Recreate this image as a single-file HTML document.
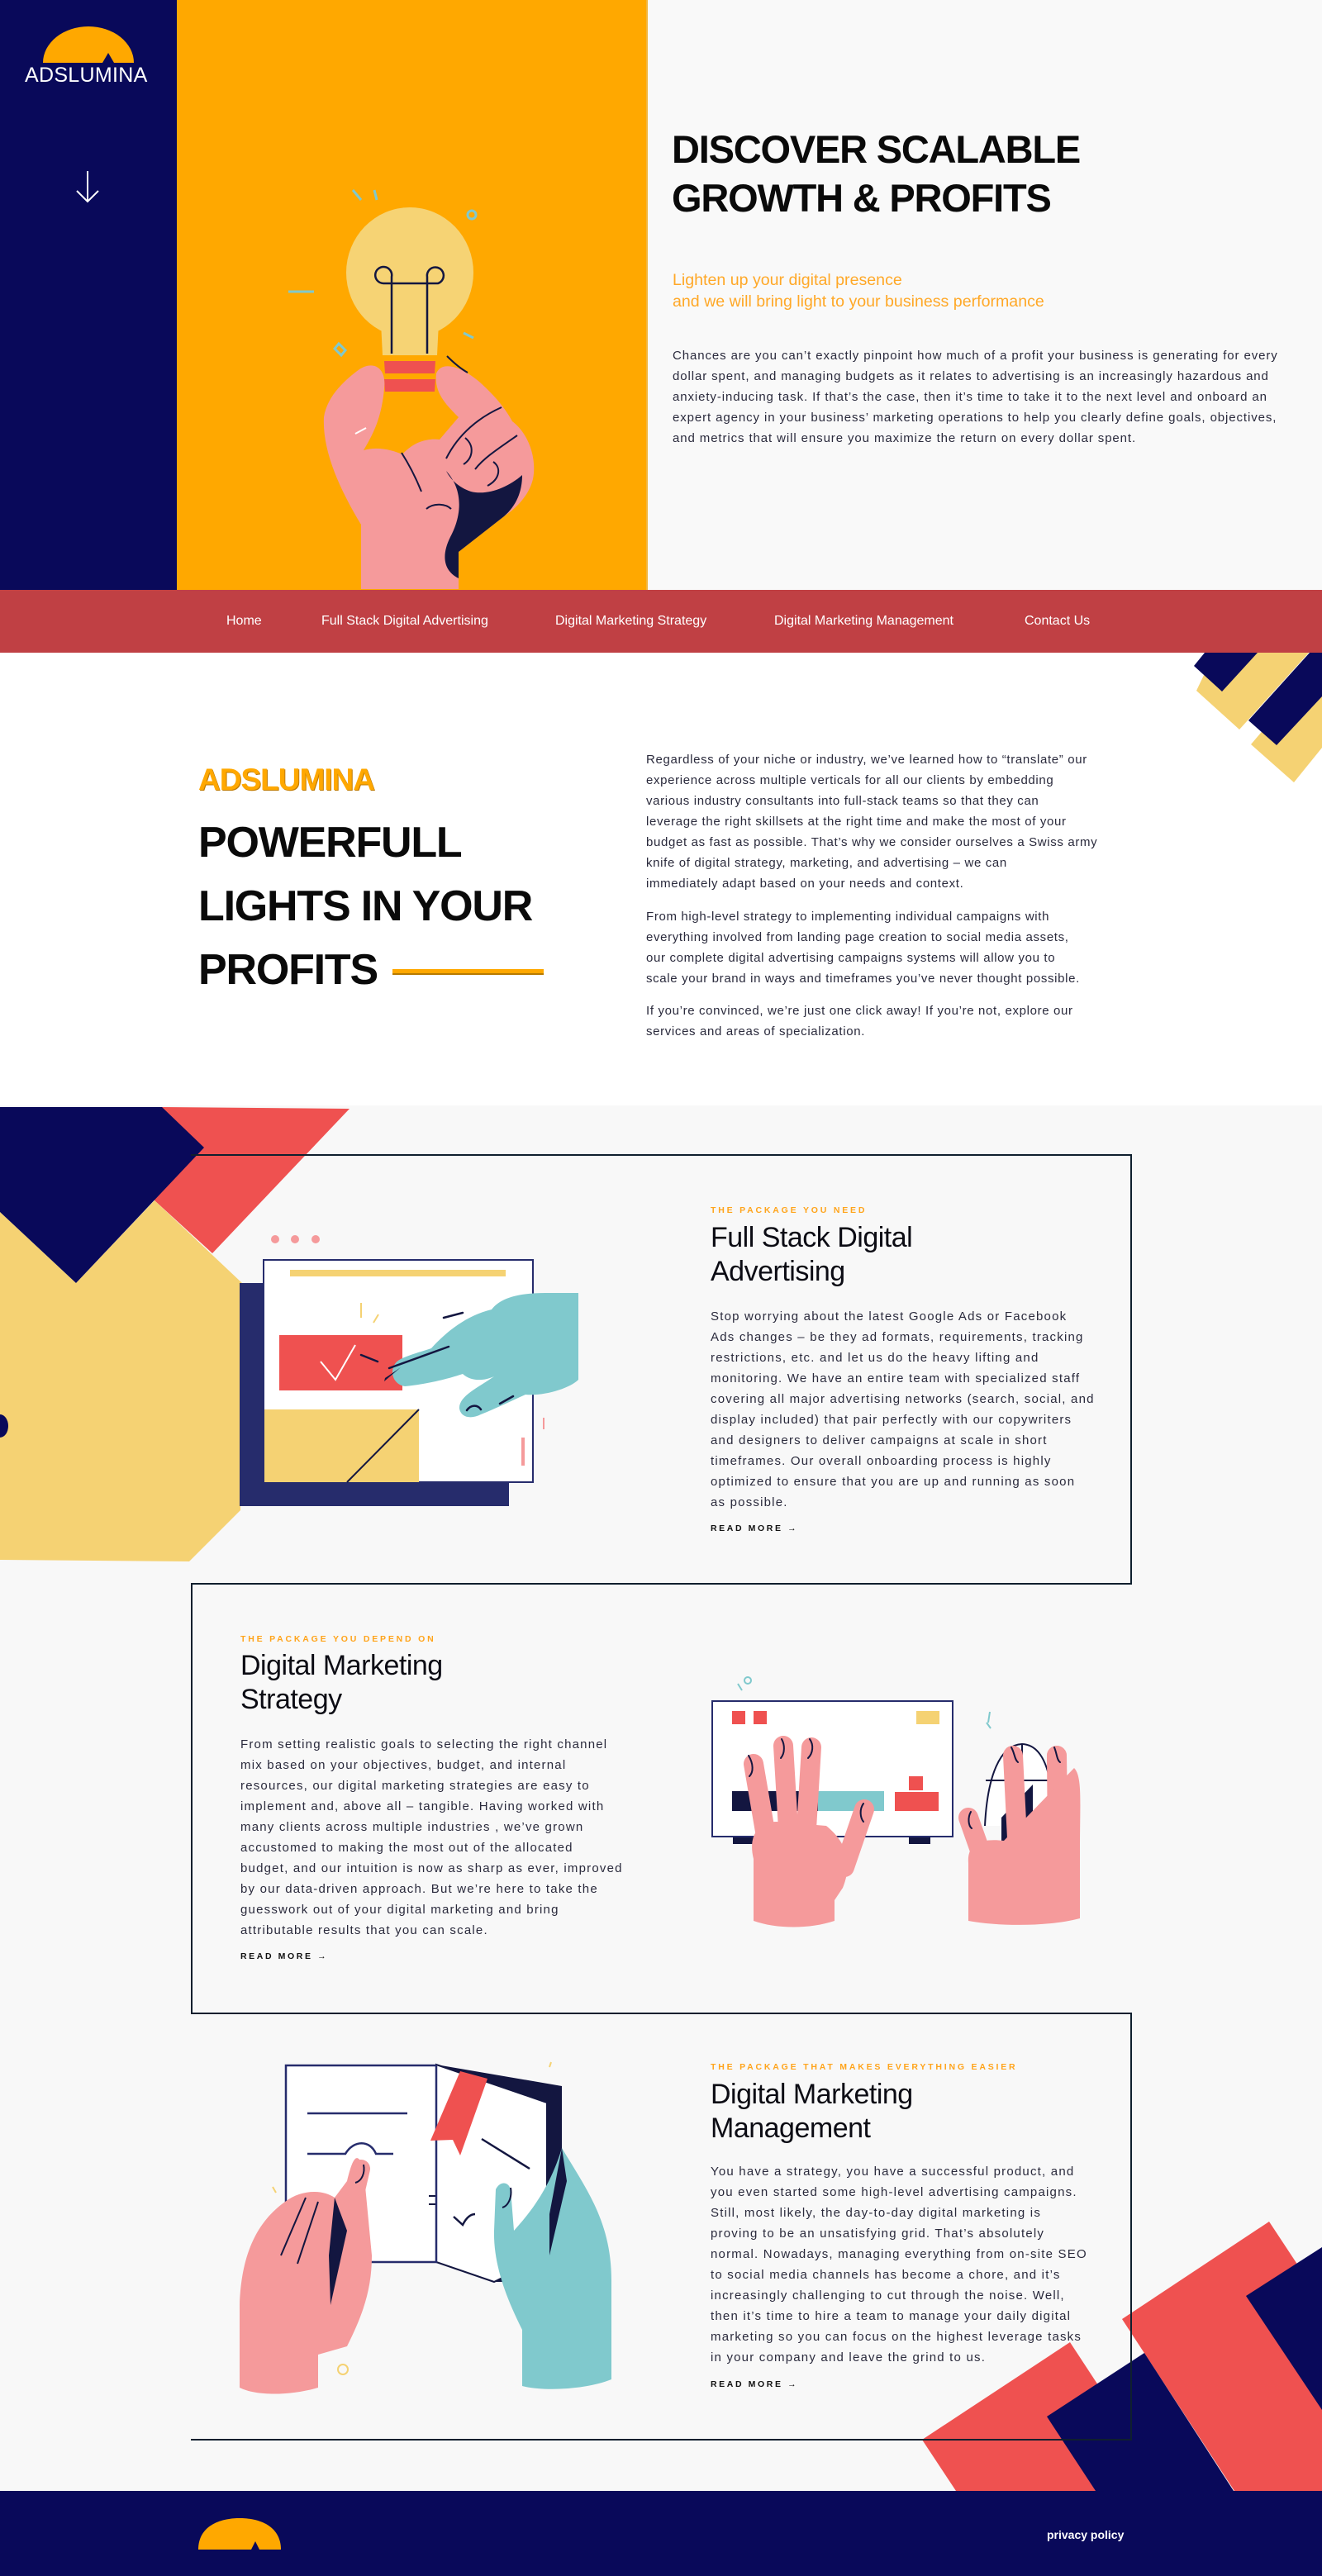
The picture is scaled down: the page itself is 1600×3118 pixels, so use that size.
<!DOCTYPE html>
<html><head><meta charset="utf-8">
<style>
*{margin:0;padding:0;box-sizing:border-box}
html,body{width:1600px;height:3118px;overflow:hidden;background:#f8f8f8}
body{position:relative;font-family:"Liberation Sans",sans-serif;color:#26263a}
.a{position:absolute;white-space:nowrap}
svg.bg{position:absolute;left:0;top:0}
.p{font-size:15px;line-height:25px;color:#2a2a3c}
.ph{letter-spacing:0.9px}
.ps{letter-spacing:0.65px}
.pc{font-size:15px;line-height:25px;letter-spacing:1.2px;color:#2a2a3c}
.lab{font-size:10.5px;line-height:14px;letter-spacing:2.8px;color:#ffa41b;font-weight:bold}
.rm{font-size:10.5px;line-height:14px;letter-spacing:2.6px;color:#111;font-weight:bold}
.ct{font-size:34px;line-height:41px;color:#0c0c14;letter-spacing:-0.5px}
.nav{font-size:16px;color:#fff;top:740px;line-height:24px}
</style></head><body>
<svg class="bg" width="1600" height="3118" viewBox="0 0 1600 3118">
<rect x="0" y="0" width="1600" height="714" fill="#f9f9f9"/>
<rect x="0" y="0" width="214" height="714" fill="#09095a"/>
<rect x="214" y="0" width="568" height="714" fill="#ffa800"/>
<rect x="782" y="0" width="2" height="714" fill="#f2b640"/>
<path d="M52,76 A55,44 0 0 1 162,76 Z" fill="#ffa800"/>
<path d="M124,76 L131,64 L138,76 Z" fill="#09095a"/>
<path d="M106,207 L106,244 M93,231 L106,244 L119,231" stroke="#fff" stroke-width="2" fill="none"/>
<g stroke="#80c9cd" stroke-width="3" fill="none">
<path d="M427,230 L437,242"/><path d="M453,230 L456,242"/><circle cx="571" cy="260" r="5"/><path d="M349,353 L380,353"/><path d="M561,403 L573,409"/><path d="M405,422 L413,430 L418,424 L410,416 Z"/>
</g>
<ellipse cx="496" cy="330" rx="77" ry="79" fill="#f6d374"/>
<path d="M461,390 L531,390 L529,430 L463,430 Z" fill="#f6d374"/>
<g stroke="#131640" stroke-width="2.5" fill="none">
<path d="M474,428 L474,335 A10,10 0 1 0 464,343 L530,343 A10,10 0 1 0 517,335 L517,428"/>
</g>
<path d="M465,437 L527,437 L526,452 L466,452 Z M465,459 L527,459 L526,474 L466,474 Z" fill="#ef5150"/>
<path d="M437,713 L437,635 C410,590 390,545 392,505 C396,478 420,458 435,447 C452,436 468,445 465,470 C462,505 452,525 440,545 C458,540 475,545 487,550 C500,535 518,530 532,532 L555,505 C540,490 525,475 528,452 C535,435 560,445 580,462 C600,480 612,495 620,510 C640,525 650,555 645,580 C640,600 625,615 610,625 L555,668 L555,713 Z" fill="#f59a9b"/>
<path d="M540,570 C560,592 560,622 545,650 C535,670 535,690 555,700 L555,668 L610,625 C625,612 632,595 632,575 C615,590 590,600 570,595 C555,590 545,580 540,570 Z" fill="#131640"/>
<g stroke="#131640" stroke-width="2" fill="none">
<path d="M541,431 C550,440 557,446 566,451"/><path d="M607,493 C580,505 555,525 540,555"/><path d="M626,527 C600,545 585,555 575,568"/><path d="M486,548 C500,570 508,590 510,595"/><path d="M516,616 C525,608 540,610 546,616"/><path d="M563,530 C575,540 572,555 561,562"/><path d="M597,559 C607,566 605,580 590,588"/>
</g>
<path d="M430,525 L443,518" stroke="#fff" stroke-width="2"/>
<rect x="0" y="714" width="1600" height="76" fill="#c04044"/>
<rect x="0" y="790" width="1600" height="548" fill="#ffffff"/>
<polygon points="1470,790 1584,790 1500,883 1448,836" fill="#f5d273"/>
<polygon points="1458,790 1522,790 1479,837 1445,806" fill="#09095a"/>
<polygon points="1600,800 1600,905 1566,947 1514,901" fill="#f5d273"/>
<polygon points="1585,790 1600,790 1600,843 1545,902 1511,872" fill="#09095a"/>
<rect x="475" y="1173" width="183" height="5" fill="#ffa800"/>
<rect x="475" y="1178" width="183" height="2" fill="#b77a00"/>
<polygon points="196,1340 423,1342 257,1517 187,1453" fill="#ef5150"/>
<polygon points="0,1467 92,1553 187,1453 293,1553 291,1828 229,1890 0,1888" fill="#f5d273"/>
<polygon points="0,1340 196,1340 247,1389 92,1553 0,1467" fill="#09095a"/>
<path d="M0,1712 A10,14 0 0 1 0,1740 Z" fill="#09095a"/>
<circle cx="333" cy="1500" r="5" fill="#f59a9b"/><circle cx="357" cy="1500" r="5" fill="#f59a9b"/><circle cx="382" cy="1500" r="5" fill="#f59a9b"/>
<rect x="290" y="1553" width="326" height="270" fill="#262c6c"/>
<rect x="319" y="1525" width="326" height="269" fill="#fff" stroke="#262c6c" stroke-width="2"/>
<rect x="351" y="1537" width="261" height="8" fill="#f5d273"/>
<rect x="338" y="1616" width="149" height="67" fill="#ef5150"/>
<path d="M388,1648 L406,1670 L430,1628" stroke="#fff" stroke-width="2" fill="none"/>
<rect x="320" y="1706" width="187" height="88" fill="#f5d273"/>
<path d="M420,1794 L507,1706" stroke="#131640" stroke-width="2"/>
<path d="M437,1577 L437,1595 M458,1591 L452,1601" stroke="#f5d273" stroke-width="2"/>
<rect x="631" y="1740" width="4" height="34" fill="#f59a9b"/><rect x="657" y="1716" width="2" height="14" fill="#f59a9b"/>
<path d="M700,1565 L660,1565 C625,1565 605,1572 595,1585 C565,1592 540,1612 522,1632 C510,1636 495,1640 485,1645 C470,1652 472,1675 490,1678 C520,1675 545,1668 560,1663 C570,1672 585,1672 598,1666 C578,1680 555,1690 556,1705 C558,1716 570,1718 582,1712 C600,1705 620,1695 636,1688 C660,1690 690,1680 700,1670 Z" fill="#80c9cd"/>
<g stroke="#131640" stroke-width="2.5" fill="none" stroke-linecap="round"><path d="M537,1595 L560,1589"/><path d="M471,1656 L543,1630"/><path d="M437,1640 L457,1648"/><path d="M605,1699 L621,1690"/><path d="M565,1707 C570,1700 578,1700 582,1706"/></g>
<path d="M466,1668 C472,1664 478,1660 485,1655 L465,1672 Z" fill="#131640"/>
<g stroke="#80c9cd" stroke-width="2" fill="none"><path d="M893,2038 L898,2046"/><circle cx="905" cy="2034" r="4"/><path d="M1196,2085 L1198,2072"/><path d="M1199,2092 L1194,2085"/></g>
<rect x="887" y="2223" width="26" height="9" fill="#131640"/><rect x="1100" y="2223" width="26" height="9" fill="#131640"/>
<rect x="862" y="2059" width="291" height="164" fill="#fff" stroke="#262c6c" stroke-width="2"/>
<rect x="886" y="2071" width="16" height="16" fill="#ef5150"/><rect x="912" y="2071" width="16" height="16" fill="#ef5150"/>
<rect x="1109" y="2071" width="28" height="16" fill="#f5d273"/>
<rect x="886" y="2168" width="110" height="24" fill="#131640"/><rect x="990" y="2168" width="80" height="24" fill="#80c9cd"/>
<rect x="1100" y="2150" width="17" height="17" fill="#ef5150"/><rect x="1083" y="2169" width="53" height="23" fill="#ef5150"/>
<g stroke="#f59a9b" stroke-width="24" stroke-linecap="round" fill="none">
<path d="M912,2135 L930,2240"/><path d="M948,2113 L955,2230"/><path d="M982,2115 L975,2230"/><path d="M1046,2190 L1022,2260"/>
<path d="M1226,2125 L1232,2240"/><path d="M1279,2125 L1280,2240"/><path d="M1172,2200 L1195,2265"/>
</g>
<path d="M1290,2155 L1290,2250 L1300,2250 L1305,2160 Z" fill="#f59a9b"/>
<path d="M912,2325 L912,2250 C905,2222 918,2205 940,2205 L1000,2210 C1025,2230 1032,2255 1020,2285 L1010,2300 L1010,2325 C980,2335 940,2335 912,2325 Z" fill="#f59a9b"/>
<path d="M1192,2210 C1195,2150 1210,2112 1237,2111 C1264,2112 1275,2150 1275,2210" fill="#fff" stroke="#131640" stroke-width="2"/>
<path d="M1193,2155 L1275,2155 M1237,2111 L1237,2155" stroke="#131640" stroke-width="2"/>
<path d="M1212,2200 L1250,2160 L1250,2230 L1212,2235 Z" fill="#131640"/>
<g stroke="#f59a9b" stroke-width="24" stroke-linecap="round" fill="none"><path d="M1226,2125 L1232,2245"/><path d="M1279,2125 L1280,2245"/></g>
<path d="M1172,2325 L1172,2255 C1170,2230 1190,2225 1215,2228 L1300,2140 C1310,2150 1307,2180 1307,2240 L1307,2322 C1270,2332 1210,2332 1172,2325 Z" fill="#f59a9b"/>
<g stroke="#131640" stroke-width="2" fill="none" stroke-linecap="round"><path d="M906,2125 C912,2135 912,2145 907,2150"/><path d="M946,2105 C950,2112 950,2122 945,2128"/><path d="M980,2105 C985,2112 984,2122 978,2128"/><path d="M1045,2183 C1040,2190 1041,2200 1045,2205"/><path d="M1224,2115 C1228,2122 1228,2130 1232,2133"/><path d="M1276,2115 C1279,2122 1279,2130 1283,2133"/><path d="M1175,2193 C1171,2200 1172,2210 1176,2213"/></g>
<polygon points="528,2499 680,2525 680,2762 598,2762 528,2738" fill="#131640"/>
<polygon points="528,2499 662,2545 662,2730 598,2762 528,2738" fill="#fff" stroke="#131640" stroke-width="2"/>
<rect x="346" y="2500" width="182" height="238" fill="#fff" stroke="#262c6c" stroke-width="2.5"/>
<path d="M372,2558 L493,2558" stroke="#262c6c" stroke-width="2.5"/>
<path d="M372,2607 L418,2607 C428,2590 448,2590 455,2607 L476,2607" stroke="#262c6c" stroke-width="2.5" fill="none"/>
<path d="M583,2589 L641,2625 M549,2683 L560,2693 C565,2683 570,2680 575,2680" stroke="#131640" stroke-width="2.5" fill="none"/>
<path d="M519,2658 L527,2658 M519,2668 L527,2668" stroke="#131640" stroke-width="2"/>
<polygon points="557,2507 590,2516 557,2609 548,2590 521,2591" fill="#ef5150"/>
<path d="M665,2502 L667,2496 M330,2647 L334,2654" stroke="#f5d273" stroke-width="2"/>
<circle cx="415" cy="2868" r="6" fill="none" stroke="#f5d273" stroke-width="2"/>
<path d="M290,2890 L290,2790 C292,2730 310,2690 345,2665 C365,2650 390,2650 405,2660 L420,2640 C426,2615 432,2600 440,2625 L450,2730 C450,2770 440,2800 420,2840 L385,2850 L385,2890 C350,2900 310,2900 290,2890 Z" fill="#f59a9b"/>
<g stroke="#f59a9b" stroke-width="22" stroke-linecap="round"><path d="M437,2625 L415,2720"/></g>
<path d="M405,2660 L398,2730 L400,2790 L420,2700 Z" fill="#131640"/>
<g stroke="#131640" stroke-width="2" fill="none"><path d="M440,2620 C442,2630 438,2640 430,2642"/><path d="M370,2660 L340,2730 M385,2665 L360,2740"/></g>
<path d="M632,2888 L632,2820 C612,2780 597,2740 598,2700 L600,2650 C605,2640 615,2640 618,2650 L622,2700 C640,2680 665,2650 680,2600 C710,2650 740,2690 740,2760 L740,2880 C710,2892 660,2895 632,2888 Z" fill="#80c9cd"/>
<path d="M680,2600 L686,2640 L665,2730 L665,2680 Z" fill="#131640"/>
<path d="M618,2648 C620,2660 615,2670 608,2672" stroke="#131640" stroke-width="2" fill="none"/>
<polygon points="1116,2953 1295,2835 1413,3015 1157,3015" fill="#ef5150"/>
<polygon points="1358,2807 1536,2689 1604,2792 1600,3015 1494,3015" fill="#ef5150"/>
<polygon points="1267,2925 1385,2848 1493,3015 1326,3015" fill="#09095a"/>
<polygon points="1508,2779 1600,2720 1600,2917" fill="#09095a"/>
<g fill="#0f1f2e">
<rect x="231" y="1397" width="1139" height="2"/>
<rect x="1368" y="1397" width="2" height="521"/>
<rect x="231" y="1916" width="1139" height="2"/>
<rect x="231" y="1916" width="2" height="522"/>
<rect x="231" y="2436" width="1139" height="2"/>
<rect x="1368" y="2436" width="2" height="518"/>
<rect x="231" y="2952" width="1139" height="2"/>
</g>
<rect x="0" y="3015" width="1600" height="103" fill="#09095a"/>
<path d="M240,3086 C240,3060 262,3048 290,3048 C318,3048 340,3060 340,3086 Z" fill="#ffa800"/>
<path d="M304,3086 L309,3076 L314,3086 Z" fill="#09095a"/>
</svg>

<div class="a" style="left:30px;top:76px;font-size:25px;line-height:30px;color:#fff;letter-spacing:0.3px">ADSLUMINA</div>

<div class="a" style="left:813px;top:151px;font-size:47px;line-height:59px;color:#0a0a0a;letter-spacing:-1.2px;font-weight:bold">DISCOVER SCALABLE<br>GROWTH &amp; PROFITS</div>
<div class="a" style="left:814px;top:326px;font-size:19.6px;line-height:26px;color:#ffa827">Lighten up your digital presence<br>and we will bring light to your business performance</div>
<div class="a p ph" style="left:814px;top:418px">Chances are you can’t exactly pinpoint how much of a profit your business is generating for every<br>dollar spent, and managing budgets as it relates to advertising is an increasingly hazardous and<br>anxiety-inducing task. If that’s the case, then it’s time to take it to the next level and onboard an<br>expert agency in your business’ marketing operations to help you clearly define goals, objectives,<br>and metrics that will ensure you maximize the return on every dollar spent.</div>

<div class="a nav" style="left:274px">Home</div>
<div class="a nav" style="left:389px">Full Stack Digital Advertising</div>
<div class="a nav" style="left:672px">Digital Marketing Strategy</div>
<div class="a nav" style="left:937px">Digital Marketing Management</div>
<div class="a nav" style="left:1240px">Contact Us</div>

<div class="a" style="left:240px;top:922px;font-size:37px;line-height:44px;color:#ffa800;font-weight:bold;letter-spacing:-1px;text-shadow:1px 1px 0 #c07a00">ADSLUMINA</div>
<div class="a" style="left:240px;top:982px;font-size:52px;line-height:77px;color:#0a0a0a;font-weight:bold;letter-spacing:-1.2px">POWERFULL<br>LIGHTS IN YOUR<br>PROFITS</div>
<div class="a p ps" style="left:782px;top:907px">Regardless of your niche or industry, we’ve learned how to “translate” our<br>experience across multiple verticals for all our clients by embedding<br>various industry consultants into full-stack teams so that they can<br>leverage the right skillsets at the right time and make the most of your<br>budget as fast as possible. That’s why we consider ourselves a Swiss army<br>knife of digital strategy, marketing, and advertising – we can<br>immediately adapt based on your needs and context.</div>
<div class="a p ps" style="left:782px;top:1097px">From high-level strategy to implementing individual campaigns with<br>everything involved from landing page creation to social media assets,<br>our complete digital advertising campaigns systems will allow you to<br>scale your brand in ways and timeframes you’ve never thought possible.</div>
<div class="a p ps" style="left:782px;top:1211px">If you’re convinced, we’re just one click away! If you’re not, explore our<br>services and areas of specialization.</div>

<div class="a lab" style="left:860px;top:1458px">THE PACKAGE YOU NEED</div>
<div class="a ct" style="left:860px;top:1478px">Full Stack Digital<br>Advertising</div>
<div class="a pc" style="left:860px;top:1581px">Stop worrying about the latest Google Ads or Facebook<br>Ads changes – be they ad formats, requirements, tracking<br>restrictions, etc. and let us do the heavy lifting and<br>monitoring. We have an entire team with specialized staff<br>covering all major advertising networks (search, social, and<br>display included) that pair perfectly with our copywriters<br>and designers to deliver campaigns at scale in short<br>timeframes. Our overall onboarding process is highly<br>optimized to ensure that you are up and running as soon<br>as possible.</div>
<div class="a rm" style="left:860px;top:1843px">READ MORE →</div>

<div class="a lab" style="left:291px;top:1977px">THE PACKAGE YOU DEPEND ON</div>
<div class="a ct" style="left:291px;top:1996px">Digital Marketing<br>Strategy</div>
<div class="a pc" style="left:291px;top:2099px">From setting realistic goals to selecting the right channel<br>mix based on your objectives, budget, and internal<br>resources, our digital marketing strategies are easy to<br>implement and, above all – tangible. Having worked with<br>many clients across multiple industries , we’ve grown<br>accustomed to making the most out of the allocated<br>budget, and our intuition is now as sharp as ever, improved<br>by our data-driven approach. But we’re here to take the<br>guesswork out of your digital marketing and bring<br>attributable results that you can scale.</div>
<div class="a rm" style="left:291px;top:2361px">READ MORE →</div>

<div class="a lab" style="left:860px;top:2495px">THE PACKAGE THAT MAKES EVERYTHING EASIER</div>
<div class="a ct" style="left:860px;top:2515px">Digital Marketing<br>Management</div>
<div class="a pc" style="left:860px;top:2616px">You have a strategy, you have a successful product, and<br>you even started some high-level advertising campaigns.<br>Still, most likely, the day-to-day digital marketing is<br>proving to be an unsatisfying grid. That’s absolutely<br>normal. Nowadays, managing everything from on-site SEO<br>to social media channels has become a chore, and it’s<br>increasingly challenging to cut through the noise. Well,<br>then it’s time to hire a team to manage your daily digital<br>marketing so you can focus on the highest leverage tasks<br>in your company and leave the grind to us.</div>
<div class="a rm" style="left:860px;top:2879px">READ MORE →</div>

<div class="a" style="left:1267px;top:3059px;font-size:14px;line-height:18px;color:#fff;font-weight:bold">privacy policy</div>
</body></html>
